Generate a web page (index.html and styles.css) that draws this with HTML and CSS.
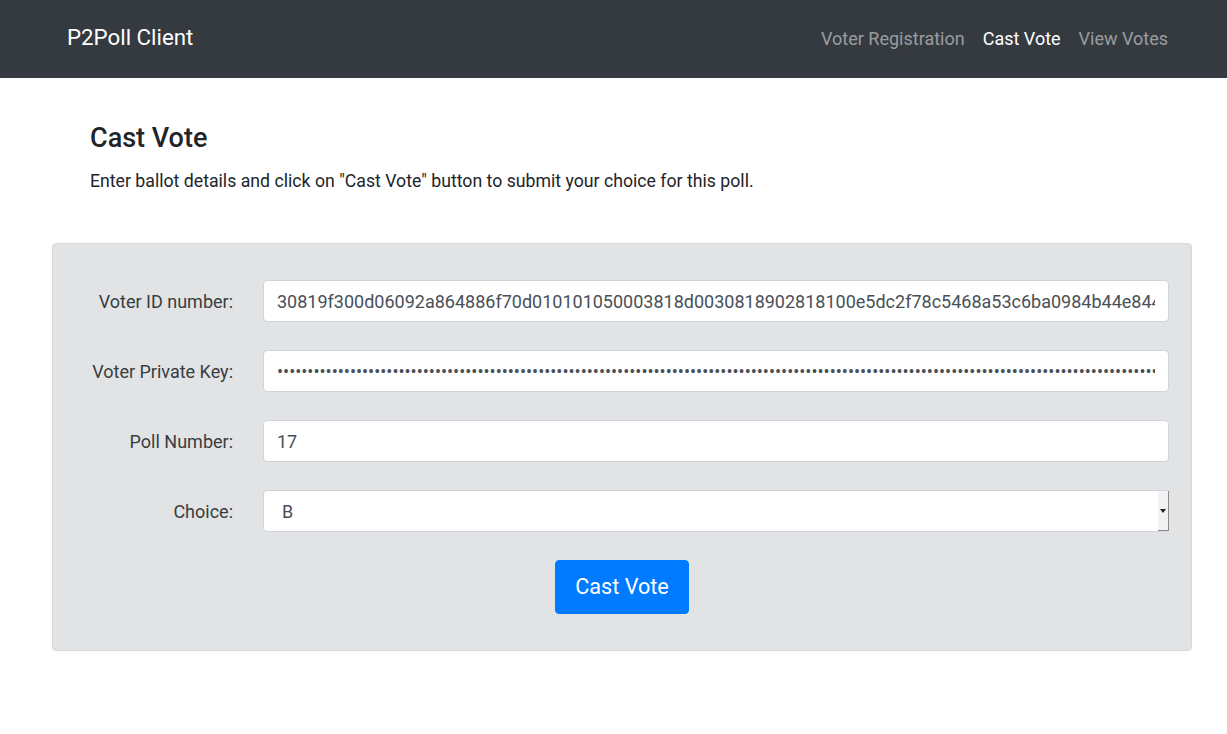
FILE: index.html
```html
<!DOCTYPE html>
<html lang="en">
<head>
  <meta charset="UTF-8">
  <meta name="viewport" content="width=device-width, initial-scale=1.0">
  <title>P2Poll Client</title>
  <link rel="stylesheet" href="styles.css">
</head>
<body>

  <header class="navbar">
    <a href="#" class="brand">P2Poll Client</a>
    <nav class="nav-links">
      <a href="#" class="nav-link">Voter Registration</a>
      <a href="#" class="nav-link active">Cast Vote</a>
      <a href="#" class="nav-link">View Votes</a>
    </nav>
  </header>

  <div class="container">
    <div class="intro">
      <h3>Cast Vote</h3>
      <p>Enter ballot details and click on "Cast Vote" button to submit your choice for this poll.</p>
    </div>

    <!-- Ballot form -->
    <form class="ballot">
      <div class="form-row">
        <label for="voter-id">Voter ID number:</label>
        <input type="text" id="voter-id" class="form-control" value="30819f300d06092a864886f70d010101050003818d0030818902818100e5dc2f78c5468a53c6ba0984b44e84435c7a1e9b02f3d64a8e1c6b7d09f2e4a1b3c5d7e9f0a2b4c6d8e">
      </div>
      <div class="form-row">
        <label for="voter-key">Voter Private Key:</label>
        <input type="password" id="voter-key" class="form-control" value="308202763020100300d06092a864886f70d0101010500048202603082025c02010002818100e5dc2f78c5468a53c6ba0984b44e844c7a1e9b02f3d64a8e1c6b7d09f2e4a1b3c5d7e9f0a2b4c6d8e0f1a2b3c4d5e6f708192a3b4c5d6e7f8091a2b3c4d5e6f7081">
      </div>
      <div class="form-row">
        <label for="poll-number">Poll Number:</label>
        <input type="text" id="poll-number" class="form-control" value="17">
      </div>
      <div class="form-row">
        <label for="choice">Choice:</label>
        <div class="select-wrap">
          <select id="choice" class="form-control">
            <option>A</option>
            <option selected>B</option>
            <option>C</option>
          </select>
          <span class="select-arrow"></span>
        </div>
      </div>
      <div class="actions">
        <button type="button" class="btn">Cast Vote</button>
      </div>
    </form>
  </div>

</body>
</html>
```

FILE: styles.css
```css
body {
  font-family: Roboto, "Helvetica Neue", Arial, sans-serif;
  font-size: 18px;
  line-height: 1.5;
  color: #212529;
  margin: 0;
  padding: 0;
  background-color: #fff;
}
.navbar {
  background-color: #343a40;
  height: 78px;
  box-sizing: border-box;
  display: flex;
  justify-content: space-between;
  align-items: center;
  padding: 0 50px 2px 67px;
}
.brand {
  color: #fff;
  font-size: 22.3px;
  text-decoration: none;
}
.nav-links {
  display: flex;
}
.nav-link {
  color: rgba(255, 255, 255, 0.5);
  text-decoration: none;
  padding: 0 9px;
}
.nav-link.active {
  color: #fff;
}
.container {
  width: 1140px;
  margin: 0 auto 0 52px;
}
.intro {
  padding: 44px 0 0 38px;
}
.intro h3 {
  margin: 0 0 13px;
  font-size: 27px;
  font-weight: 500;
  line-height: 1.2;
}
.intro p {
  margin: 0;
  font-size: 17.7px;
  line-height: 28px;
}

/* Form box */
.ballot {
  margin-top: 48px;
  background-color: #e2e3e5;
  border: 1px solid #d6d8db;
  border-radius: 4px;
  padding: 36px 22px;
  display: flex;
  flex-direction: column;
  gap: 28px;
  color: #383d41;
}
.form-row {
  display: grid;
  grid-template-columns: 158px 1fr;
  gap: 30px;
  align-items: center;
}
.form-row label {
  text-align: right;
}
.form-control {
  box-sizing: border-box;
  width: 100%;
  height: 42px;
  padding: 0 13px;
  font-family: inherit;
  font-size: 18px;
  color: #495057;
  background-color: #fff;
  border: 1px solid #ced4da;
  border-radius: 4px;
  margin: 0;
}
.select-wrap {
  position: relative;
}
select.form-control {
  -webkit-appearance: none;
  appearance: none;
  padding-left: 18px;
}
.select-arrow {
  position: absolute;
  top: 1px;
  right: 0;
  width: 11px;
  height: 40px;
  background-color: #f2f2f4;
  border-right: 1px solid #8a8a8a;
  border-bottom: 1px solid #8a8a8a;
  box-sizing: border-box;
}
.select-arrow::after {
  content: "";
  position: absolute;
  top: 18px;
  left: 2px;
  border-left: 3px solid transparent;
  border-right: 3px solid transparent;
  border-top: 4px solid #222;
}
.actions {
  display: flex;
  justify-content: center;
}
.btn {
  font-family: inherit;
  font-size: 21.6px;
  line-height: 30px;
  color: #fff;
  background-color: #007bff;
  border: 1px solid #007bff;
  border-radius: 4px;
  padding: 11px 19px;
  cursor: pointer;
}
.btn:hover {
  background-color: #0069d9;
}
```
